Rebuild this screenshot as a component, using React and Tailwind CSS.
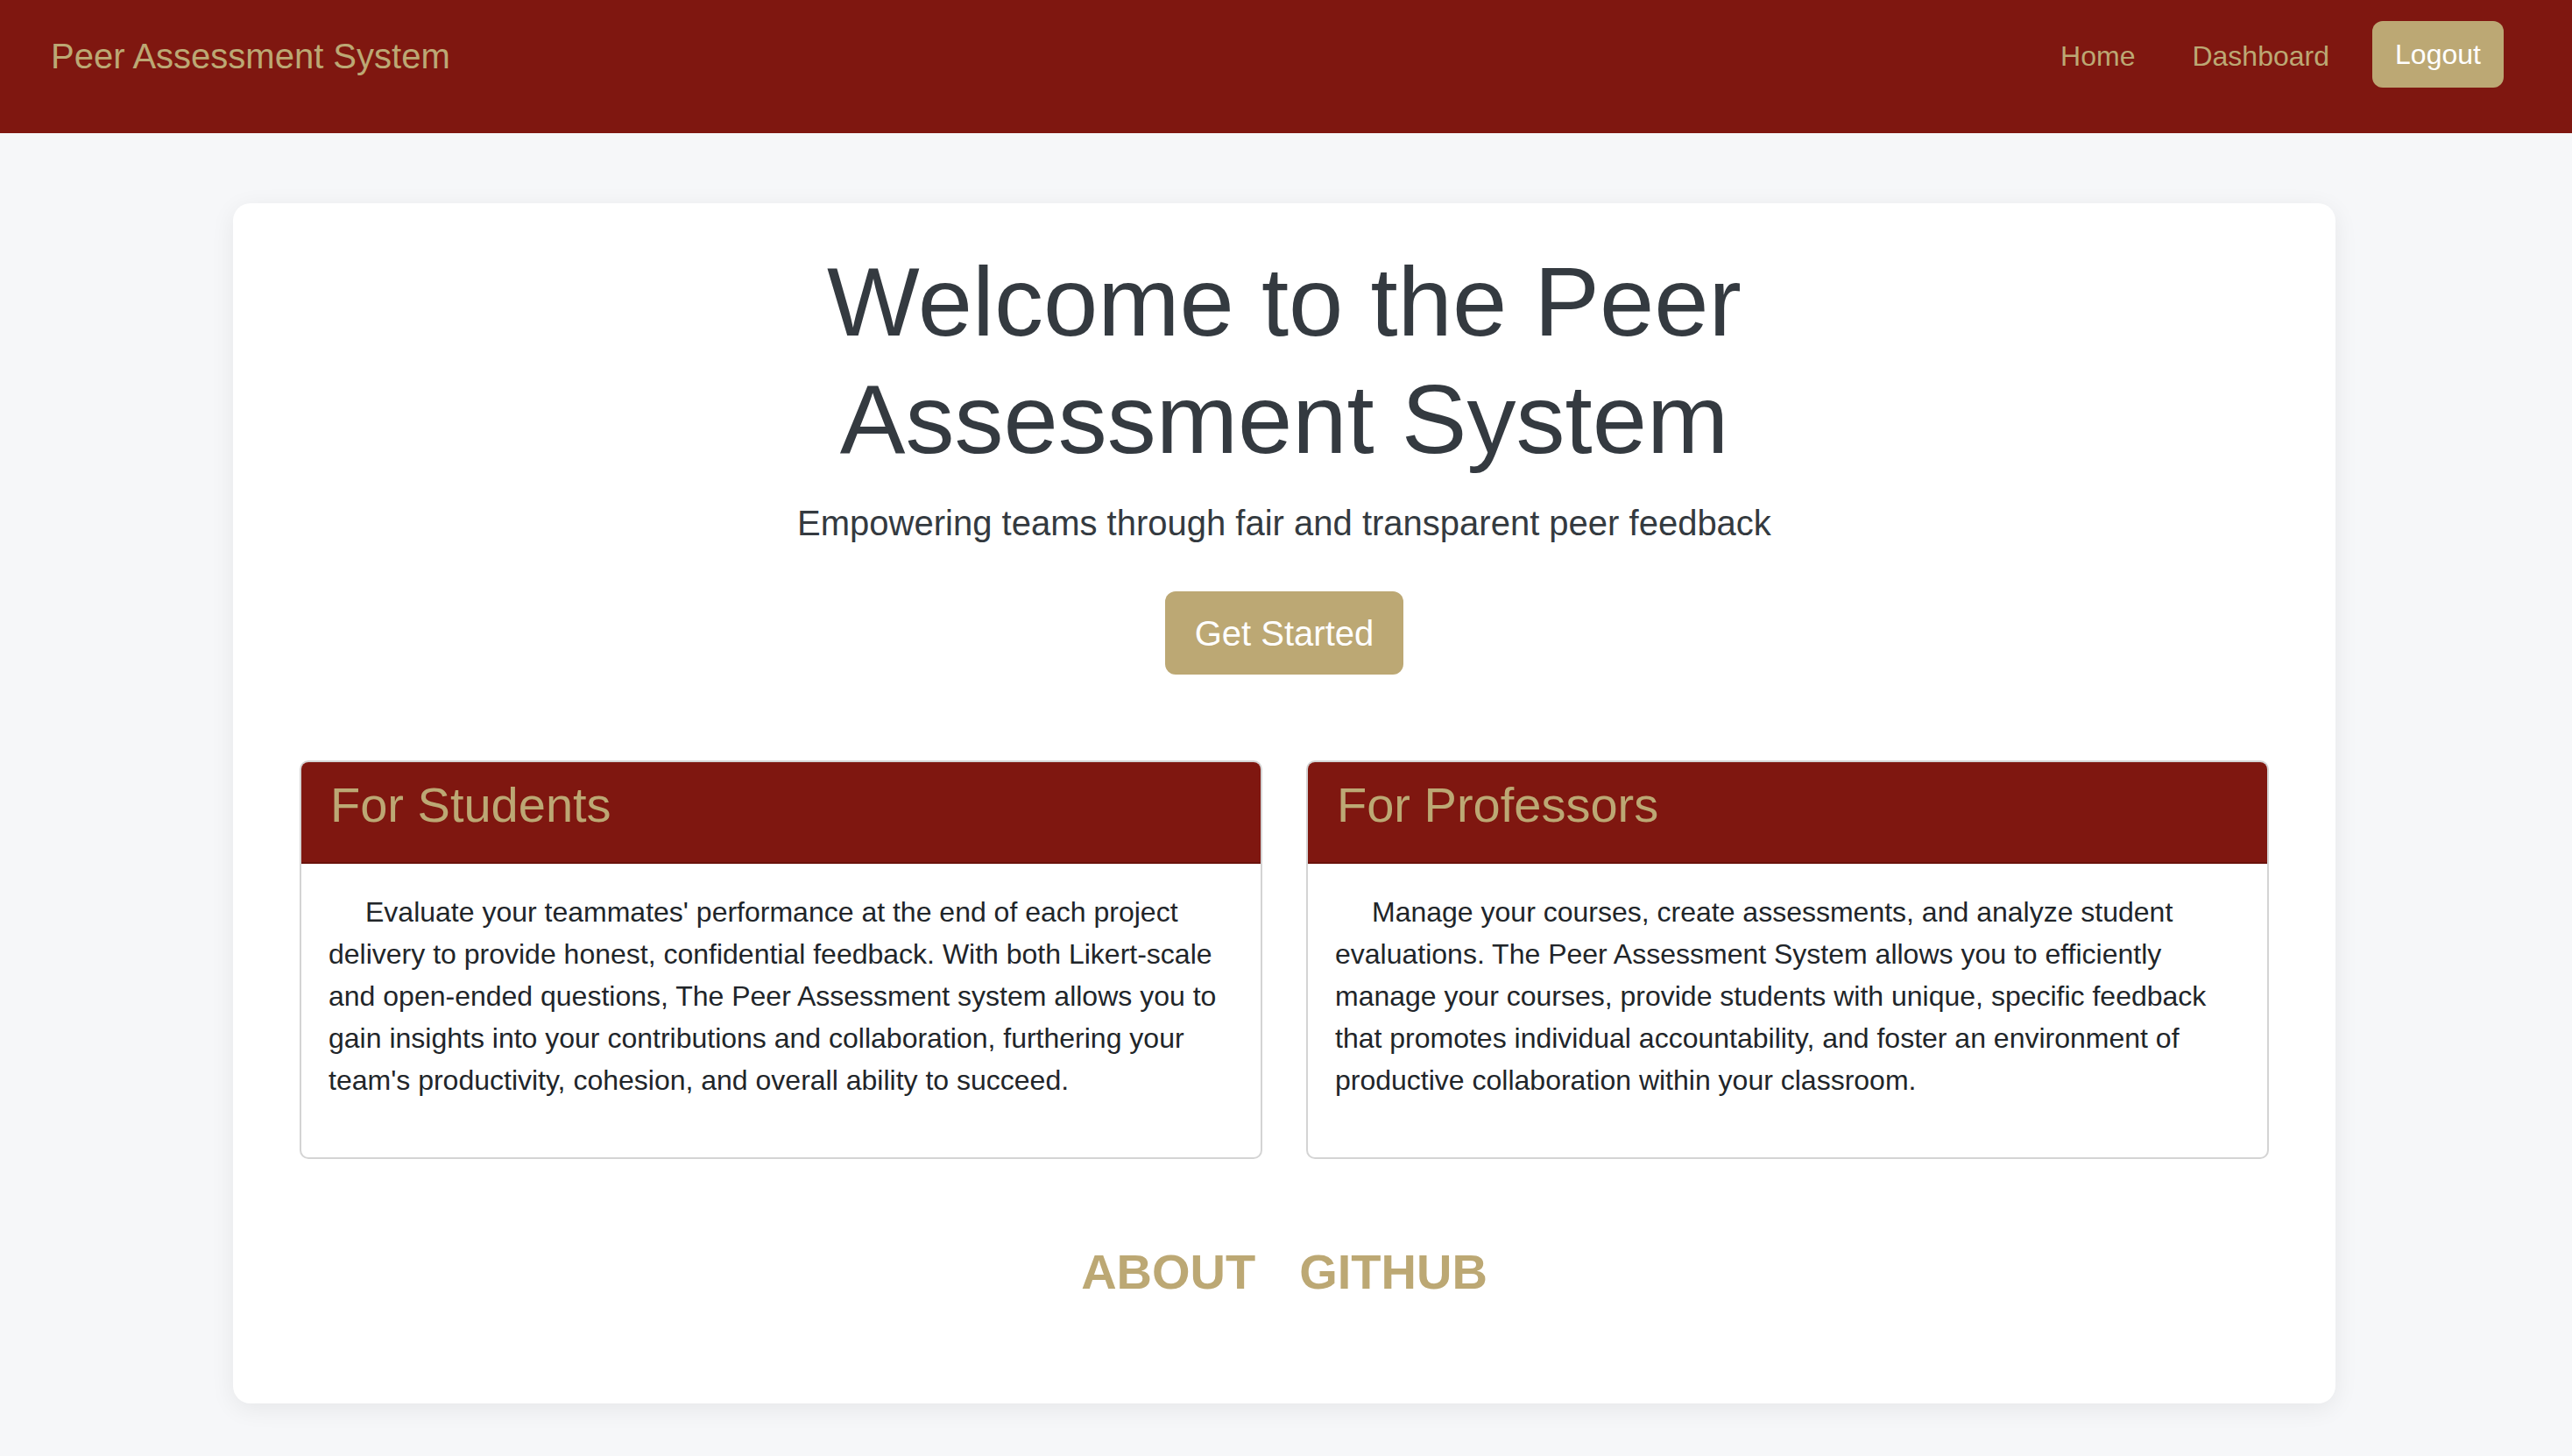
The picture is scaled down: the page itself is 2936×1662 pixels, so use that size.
import React from "react";

function FeatureCard({ title, text }) {
  return (
    <div className="flex-1 rounded-[10px] border-2 border-[#d4d4d4] bg-white overflow-hidden">
      <div className="bg-[#7f1710] border-b-2 border-[#6a120c] px-[33px] pt-[15px] pb-[32px]">
        <h2 className="text-[56px] leading-[67px] text-[#bca874] font-normal">{title}</h2>
      </div>
      <div className="px-[31px] pt-[31px] pb-[64px]">
        <p className="text-[32px] leading-[48px] text-[#212529] indent-[42px]">{text}</p>
      </div>
    </div>
  );
}

export default function App() {
  return (
    <div className="min-h-screen bg-[#f6f7f9] font-['Liberation_Sans',Arial,sans-serif]">
      <nav className="h-[152px] bg-[#7f1710] pt-[24px] pl-[58px] pr-[78px]">
        <div className="h-[76px] flex items-center justify-between">
          <span className="pt-[4px] text-[40px] leading-[48px] text-[#bca874]">Peer Assessment System</span>
          <div className="flex items-center">
            <a className="pt-[3px] text-[32px] leading-[48px] text-[#bca874]">Home</a>
            <a className="pt-[3px] ml-[65px] text-[32px] leading-[48px] text-[#bca874]">Dashboard</a>
            <button className="ml-[49px] h-[76px] w-[150px] rounded-[12px] bg-[#bca874] text-white text-[32px] leading-[48px] flex items-center justify-center">
              Logout
            </button>
          </div>
        </div>
      </nav>

      <main className="pt-[80px] pb-[60px] pl-[266px]">
        <div className="w-[2400px] rounded-[20px] bg-white shadow-[0_6px_28px_rgba(0,0,0,0.07)] px-[76px] pt-[46px] pb-[117px] flex flex-col items-center">
          <h1 className="max-w-[1300px] text-center text-[112px] leading-[134px] text-[#343a40] font-normal">
            Welcome to the Peer Assessment System
          </h1>
          <p className="mt-[21px] text-[40px] leading-[60px] text-[#343a40]">
            Empowering teams through fair and transparent peer feedback
          </p>
          <button className="mt-[48px] h-[95px] px-[34px] rounded-[12px] bg-[#bca874] text-white text-[40px] leading-[60px] flex items-center">
            Get Started
          </button>

          <div className="mt-[98px] w-full flex gap-[50px]">
            <FeatureCard
              title="For Students"
              text="Evaluate your teammates' performance at the end of each project delivery to provide honest, confidential feedback. With both Likert-scale and open-ended questions, The Peer Assessment system allows you to gain insights into your contributions and collaboration, furthering your team's productivity, cohesion, and overall ability to succeed."
            />
            <FeatureCard
              title="For Professors"
              text="Manage your courses, create assessments, and analyze student evaluations. The Peer Assessment System allows you to efficiently manage your courses, provide students with unique, specific feedback that promotes individual accountability, and foster an environment of productive collaboration within your classroom."
            />
          </div>

          <div className="mt-[95px] flex gap-[50px]">
            <a className="text-[56px] leading-[67px] font-bold text-[#bca874]">ABOUT</a>
            <a className="text-[56px] leading-[67px] font-bold text-[#bca874]">GITHUB</a>
          </div>
        </div>
      </main>
    </div>
  );
}
